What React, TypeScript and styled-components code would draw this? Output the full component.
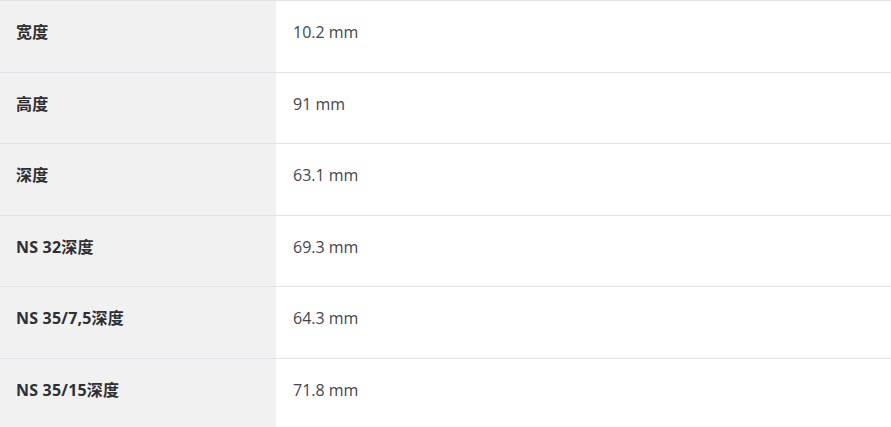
import React from "react";
import styled, { createGlobalStyle } from "styled-components";

const Global = createGlobalStyle`
  html, body { margin: 0; padding: 0; background: #fff; }
  body { font-family: "Open Sans", "Noto Sans CJK SC", sans-serif; }
`;

const Table = styled.div`
  display: flex;
  flex-direction: column;
  width: 891px;
`;

const Row = styled.div`
  display: grid;
  grid-template-columns: 276px 1fr;
  height: 71.5px;
  box-sizing: border-box;
  border-top: 1px solid #e0e2e5;
`;

const Label = styled.div`
  background: #f1f1f1;
  padding: 19px 16px 0;
  font-size: 16px;
  line-height: 24px;
  font-weight: 700;
  letter-spacing: 0.2px;
  color: #2e3033;
  font-family: "Noto Sans", "Noto Sans CJK SC", sans-serif;
`;

const Value = styled.div`
  padding: 19px 17px 0;
  font-size: 16px;
  line-height: 24px;
  color: #43464a;
  font-family: "Open Sans", "Noto Sans CJK SC", sans-serif;
`;

const rows: [string, string][] = [
  ["宽度", "10.2 mm"],
  ["高度", "91 mm"],
  ["深度", "63.1 mm"],
  ["NS 32深度", "69.3 mm"],
  ["NS 35/7,5深度", "64.3 mm"],
  ["NS 35/15深度", "71.8 mm"],
];

export default function App() {
  return (
    <>
      <Global />
      <Table>
        {rows.map(([k, v]) => (
          <Row key={k}>
            <Label>{k}</Label>
            <Value>{v}</Value>
          </Row>
        ))}
      </Table>
    </>
  );
}
